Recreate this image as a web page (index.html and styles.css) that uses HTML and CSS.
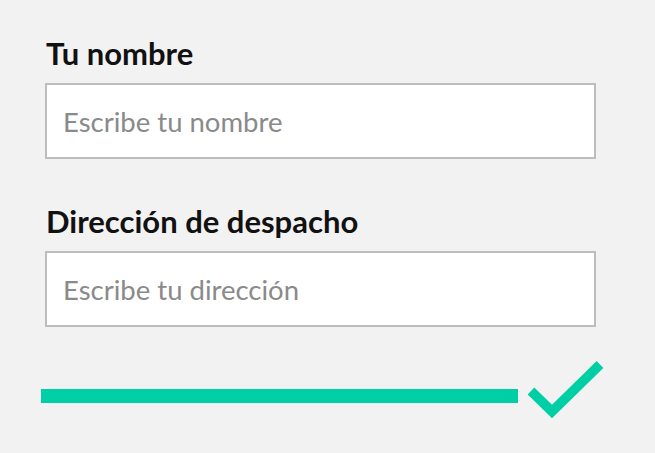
FILE: index.html
```html
<!DOCTYPE html>
<html lang="es">
<head>
<meta charset="utf-8">
<link rel="stylesheet" href="styles.css">
</head>
<body>
<form class="form">
  <div class="field">
    <label class="label" for="nombre">Tu nombre</label>
    <input class="input" id="nombre" type="text" placeholder="Escribe tu nombre">
  </div>
  <div class="field">
    <label class="label" for="dir">Dirección de despacho</label>
    <input class="input" id="dir" type="text" placeholder="Escribe tu dirección">
  </div>
  <div class="progress">
    <div class="bar"></div>
    <svg class="check" width="90" height="70" viewBox="0 0 90 70">
      <polyline points="11,36 32,56.5 80,9.5" fill="none" stroke="#00cfa5" stroke-width="9.5"/>
    </svg>
  </div>
</form>
</body>
</html>
```
FILE: styles.css
```css
html, body {
  margin: 0;
  background: #f2f2f2;
}
.form {
  width: 655px;
  height: 453px;
  box-sizing: border-box;
  padding: 35px 0 0 45px;
  font-family: Lato, "Noto Sans", sans-serif;
}
.field {
  display: flex;
  flex-direction: column;
  width: 551px;
}
.field + .field {
  margin-top: 44px;
}
.label {
  font-weight: 700;
  font-size: 31px;
  line-height: 36px;
  color: #111;
  margin-bottom: 12px;
  padding-left: 1px;
}
.input {
  box-sizing: border-box;
  width: 551px;
  height: 76px;
  border: 2px solid #bdbdbd;
  background: #fff;
  padding: 0 16px;
  font-family: Lato, "Noto Sans", sans-serif;
  font-size: 27.5px;
  color: #333;
  outline: none;
}
.input::placeholder {
  color: #8a8a8a;
}
.progress {
  display: flex;
  align-items: flex-start;
  margin-left: -4px;
  margin-top: 28px;
}
.bar {
  width: 477px;
  height: 14px;
  background: #00cfa5;
  margin-top: 34px;
}
.check {
  margin-left: 2px;
}
```
